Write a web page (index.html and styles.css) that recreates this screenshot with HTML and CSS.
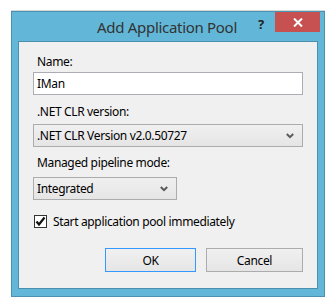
FILE: index.html
```html
<!DOCTYPE html>
<html lang="en">
<head>
<meta charset="UTF-8">
<title>Add Application Pool</title>
<link rel="stylesheet" href="styles.css">
</head>
<body>

<div class="window">
  <div class="titlebar">
    <span class="title">Add Application Pool</span>
    <span class="help">?</span>
    <span class="close">
      <svg width="10" height="9" viewBox="0 0 10 9"><path d="M1 0.5 L9 8.5 M9 0.5 L1 8.5" stroke="#fff" stroke-width="2"/></svg>
    </span>
  </div>
  <div class="client">
    <label class="field-label" for="name">Name:</label>
    <div class="textbox" id="name">IMan</div>

    <label class="field-label lbl-clr">.NET CLR version:</label>
    <div class="combo combo-wide">
      <span>.NET CLR Version v2.0.50727</span>
      <svg class="arrow" width="8" height="6" viewBox="0 0 8 6"><path d="M0.8 1 L4 4.2 L7.2 1" stroke="#5a5a5a" stroke-width="2" fill="none"/></svg>
    </div>

    <label class="field-label lbl-mode">Managed pipeline mode:</label>
    <div class="combo combo-short">
      <span>Integrated</span>
      <svg class="arrow" width="8" height="6" viewBox="0 0 8 6"><path d="M0.8 1 L4 4.2 L7.2 1" stroke="#5a5a5a" stroke-width="2" fill="none"/></svg>
    </div>

    <div class="check-row">
      <span class="checkbox">
        <svg width="11" height="11" viewBox="0 0 11 11"><path d="M1.5 5.5 L4 8.5 L9.5 1.5" stroke="#111" stroke-width="2.2" fill="none"/></svg>
      </span>
      <span>Start application pool immediately</span>
    </div>

    <div class="buttons">
      <button class="btn btn-ok">OK</button>
      <button class="btn btn-cancel">Cancel</button>
    </div>
  </div>
</div>

</body>
</html>
```

FILE: styles.css
```css
body {
  margin: 0;
  background-color: #fff;
  font-family: "Noto Sans", "Open Sans", sans-serif;
  font-size: 12px;
  letter-spacing: -0.35px;
  color: #000;
}
.window {
  margin: 11px 0 0 11px;
  width: 312px;
  height: 284px;
  border: 1px solid #4b93b4;
  background-color: #62b7d8;
  box-shadow: 0 -1px 0 #d6d6d6;
  display: flex;
  flex-direction: column;
}
.titlebar {
  height: 29px;
  display: flex;
  align-items: flex-start;
  position: relative;
}
.title {
  position: absolute;
  left: 0;
  right: 0;
  top: 5px;
  text-align: center;
  font-size: 15px;
  letter-spacing: -0.3px;
  color: #333;
  padding-right: 2px;
}
.help {
  position: absolute;
  left: 246px;
  top: 3px;
  font-weight: bold;
  font-size: 13px;
  color: #222;
}
.close {
  position: absolute;
  left: 263px;
  top: 0;
  width: 45px;
  height: 20px;
  background-color: #c75050;
  display: flex;
  align-items: center;
  justify-content: center;
}
.client {
  margin: 0 6px 7px 6px;
  flex: 1;
  border: 1px solid #4a8fae;
  background-color: #f0f0f0;
  padding: 12px 14px 0 14px;
  display: flex;
  flex-direction: column;
}
.field-label {
  display: block;
  line-height: 16px;
  padding-left: 4px;
  color: #000;
}
.textbox {
  margin-top: 2px;
  height: 21px;
  line-height: 21px;
  border: 1px solid #abadb3;
  background-color: #fff;
  padding-left: 3px;
}
.lbl-clr {
  margin-top: 9px;
}
.combo {
  margin-top: 4px;
  height: 21px;
  border: 1px solid #acacac;
  background: linear-gradient(#f0f0f0, #e5e5e5);
  display: flex;
  align-items: center;
  justify-content: space-between;
  padding: 0 8px 0 3px;
}
.combo-short {
  width: 131px;
  margin-top: 6px;
}
.lbl-mode {
  margin-top: 8px;
}
.check-row {
  margin-top: 13px;
  display: flex;
  align-items: center;
  gap: 6px;
  padding-left: 1px;
}
.checkbox {
  width: 11px;
  height: 11px;
  border: 1px solid #333;
  background-color: #fff;
  display: flex;
}
.buttons {
  margin-top: 18px;
  display: flex;
  justify-content: flex-end;
  gap: 10px;
}
.btn {
  height: 24px;
  font-family: inherit;
  font-size: 12px;
  letter-spacing: inherit;
  color: #000;
  background: linear-gradient(#f0f0f0, #e5e5e5);
  border: 1px solid #acacac;
  padding: 0;
}
.btn-ok {
  width: 91px;
  border-color: #3399ff;
}
.btn-cancel {
  width: 97px;
}
```
